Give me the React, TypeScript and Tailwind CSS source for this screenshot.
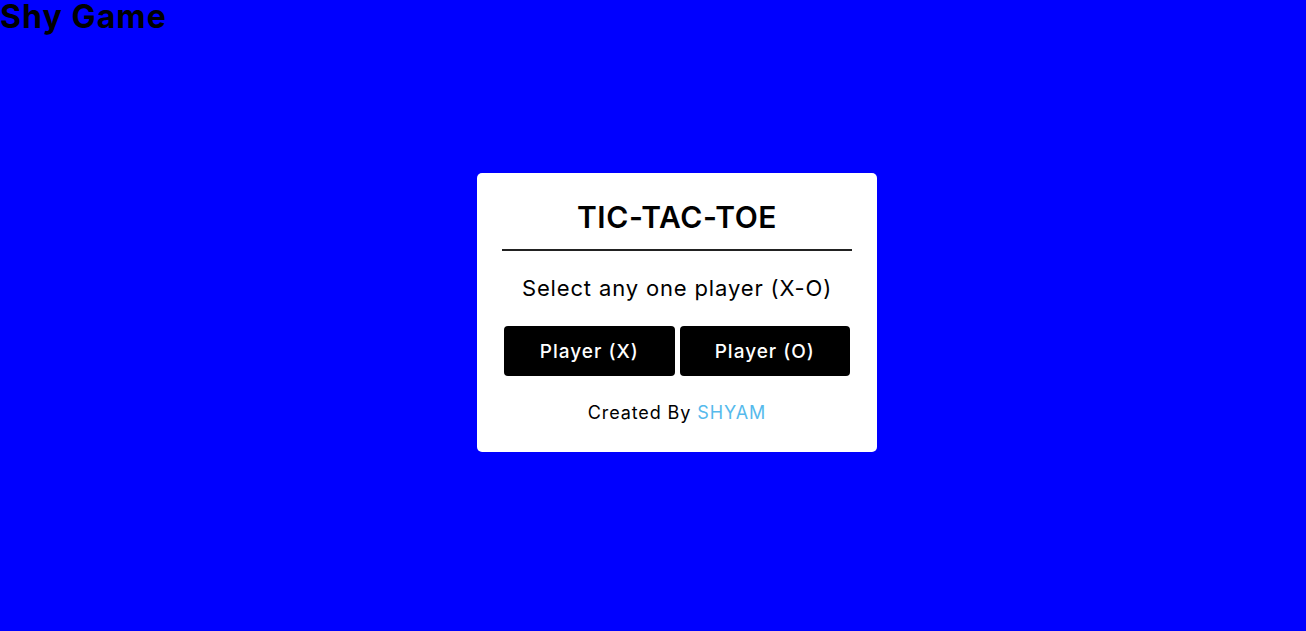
import React from "react";

export default function App() {
  return (
    <div className="min-h-[631px] w-full bg-[#0000ff] font-['Inter',sans-serif] text-black">
      <h1 className="m-0 text-[32px] font-bold leading-[33px] tracking-[1.1px]">Shy Game</h1>
      <div className="ml-[477px] mt-[140px] flex h-[279px] w-[400px] flex-col rounded-[5px] bg-white px-[25px] pt-[24px]">
        <div className="h-[40px] text-center text-[30px] font-semibold leading-[40px] tracking-[0.6px]">TIC-TAC-TOE</div>
        <div className="mt-[12px] h-[2px] w-full bg-[#222]" />
        <div className="mt-[22px] h-[30px] text-center text-[22px] leading-[30px] tracking-[0.85px]">Select any one player (X-O)</div>
        <div className="mt-[23px] flex gap-[5px] px-[2px]">
          <button className="h-[50px] flex-1 rounded-[4px] bg-black pt-[3px] text-[19px] font-medium tracking-[1px] text-white">Player (X)</button>
          <button className="h-[50px] flex-1 rounded-[4px] bg-black pt-[3px] text-[19px] font-medium tracking-[1px] text-white">Player (O)</button>
        </div>
        <div className="mt-[23px] h-[28px] text-center text-[18px] leading-[28px] tracking-[0.9px]">
          Created By <span className="text-[#56baec]">SHYAM</span>
        </div>
      </div>
    </div>
  );
}
